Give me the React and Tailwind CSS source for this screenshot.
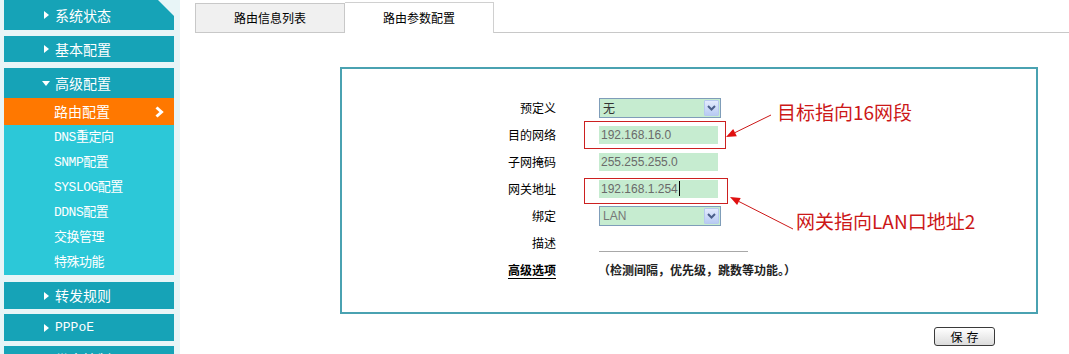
import React from "react";

const TriRight = () => (
  <svg width="5" height="8" viewBox="0 0 5 8" className="shrink-0">
    <path d="M0 0L5 4L0 8Z" fill="white" />
  </svg>
);
const TriDown = () => (
  <svg width="8" height="5" viewBox="0 0 8 5" className="shrink-0">
    <path d="M0 0L8 0L4 5Z" fill="white" />
  </svg>
);

const CJK = "font-[family-name:'Noto_Sans_CJK_SC',sans-serif]";
const MONO = "font-[family-name:'Liberation_Mono','Noto_Sans_CJK_SC',monospace]";
const ARIAL = "font-[family-name:'Liberation_Sans','Noto_Sans_CJK_SC',sans-serif]";

function MainItem({ label, h, clip, down, mono }) {
  return (
    <div
      className={`shrink-0 flex items-center bg-[#16a3b7] pl-[40px] gap-[6px] text-white ${
        mono ? `${MONO} text-[13px]` : `${CJK} text-[14px]`
      } ${clip ? "[clip-path:polygon(0_0,154px_0,100%_16px,100%_100%,0_100%)]" : ""}`}
      style={{ height: h }}
    >
      {down ? (
        <span className="w-[8px] flex justify-center -ml-[2px]">
          <TriDown />
        </span>
      ) : (
        <TriRight />
      )}
      <span className={down ? "-ml-[1px]" : ""}>{label}</span>
    </div>
  );
}

const SelectBtn = () => (
  <div className="w-[15px] h-[16px] mr-[1px] flex items-center justify-center border border-[#b7c9ef] bg-gradient-to-b from-[#e3ebfd] to-[#b8cbf3] rounded-[1px]">
    <svg width="9" height="6" viewBox="0 0 9 6">
      <path d="M1 1L4.5 4.5L8 1" fill="none" stroke="#4b5f8a" strokeWidth="2" />
    </svg>
  </div>
);

function Row({ label, children, bold }) {
  return (
    <div className="flex items-center h-[27px] shrink-0">
      <div
        className={`w-[214px] text-right text-[12px] text-black ${CJK} ${
          bold ? "font-bold underline underline-offset-[3px] text-[#111]" : ""
        }`}
      >
        {label}
      </div>
      <div className="ml-[43px] flex items-center">{children}</div>
    </div>
  );
}

const inputCls = `w-[119px] h-[18px] bg-[#c6ecd0] flex items-center pl-[2px] text-[12px] text-[#6a6a6a] ${ARIAL}`;

export default function App() {
  return (
    <div className="flex w-[1069px] h-[354px] overflow-hidden bg-white">
      {/* Sidebar */}
      <div className="w-[180px] shrink-0 bg-[#e8f5f7] pl-[4px] pr-[6px] flex flex-col overflow-hidden">
        <MainItem label="系统状态" h={30} clip />
        <div className="h-[6px] shrink-0" />
        <MainItem label="基本配置" h={26} />
        <div className="h-[6px] shrink-0" />
        <MainItem label="高级配置" h={30} down />
        <div className={`shrink-0 h-[27px] bg-[#ff7800] flex items-center justify-between pl-[50px] pr-[10px] text-white text-[14px] ${CJK}`}>
          <span>路由配置</span>
          <svg width="9" height="12" viewBox="0 0 9 12">
            <path d="M1.5 1.5L6.5 6L1.5 10.5" fill="none" stroke="white" strokeWidth="3" />
          </svg>
        </div>
        <div className={`shrink-0 bg-[#2cc8d8] flex flex-col pl-[50px] text-white text-[13px] ${MONO}`}>
          {["DNS重定向", "SNMP配置", "SYSLOG配置", "DDNS配置", "交换管理", "特殊功能"].map((t) => (
            <div key={t} className="h-[25px] flex items-center tracking-[-0.5px]">
              {t}
            </div>
          ))}
        </div>
        <div className="h-[7px] shrink-0" />
        <MainItem label="转发规则" h={27} />
        <div className="h-[5px] shrink-0" />
        <MainItem label="PPPoE" h={27} mono />
        <div className="h-[5px] shrink-0" />
        <MainItem label="带宽控制" h={27} />
      </div>

      {/* Main */}
      <div className="flex-1 flex flex-col">
        <div className={`flex items-end pl-[15px] h-[33px] shrink-0 text-[12px] text-black ${CJK}`}>
          <div className="w-[150px] h-[30px] border border-[#c8c8c8] bg-[#f0f0f0] flex items-center justify-center">
            路由信息列表
          </div>
          <div className="w-[149px] h-[31px] border border-b-0 border-l-0 border-[#d0d0d0] bg-white flex items-center justify-center">
            路由参数配置
          </div>
          <div className="flex-1 border-b border-[#c8c8c8]" />
        </div>

        <div className="ml-[160px] mt-[34px] w-[698px] flex flex-col">
          <div className="relative h-[247px] border-2 border-[#4aa2b1] pt-[25px] flex flex-col">
            <Row label="预定义">
              <div className="w-[122px] h-[20px] border border-[#7f9db9] bg-[#c6ecd0] flex items-center justify-between">
                <span className={`pl-[3px] text-[12px] text-[#333] ${CJK}`}>无</span>
                <SelectBtn />
              </div>
            </Row>
            <Row label="目的网络">
              <div className={inputCls}>192.168.16.0</div>
            </Row>
            <Row label="子网掩码">
              <div className={inputCls}>255.255.255.0</div>
            </Row>
            <Row label="网关地址">
              <div className={inputCls}>
                192.168.1.254
                <span className="inline-block w-px h-[15px] bg-black ml-[1px]" />
              </div>
            </Row>
            <Row label="绑定">
              <div className="w-[122px] h-[20px] border border-[#7f9db9] bg-[#c6ecd0] flex items-center justify-between">
                <span className={`pl-[3px] text-[12px] text-[#777] ${ARIAL}`}>LAN</span>
                <SelectBtn />
              </div>
            </Row>
            <Row label="描述">
              <div className="w-[149px] h-[18px] border-b border-[#a8a8a8]" />
            </Row>
            <Row label="高级选项" bold>
              <span className={`-ml-[1px] text-[12px] font-bold text-[#222] ${CJK}`}>
                （检测间隔，优先级，跳数等功能。）
              </span>
            </Row>

            {/* annotations */}
            <div className="absolute left-[242px] top-[52px] w-[142px] h-[28px] border-[1.5px] border-[#cc2020]" />
            <div className="absolute left-[242px] top-[109px] w-[144px] h-[26px] border-[1.5px] border-[#cc2020]" />
            <div className={`absolute left-[435px] top-[33px] text-[19px] leading-none whitespace-nowrap text-[#cc1818] ${CJK}`}>
              目标指向16网段
            </div>
            <div className={`absolute left-[454px] top-[142px] text-[19px] leading-none whitespace-nowrap text-[#cc1818] ${CJK}`}>
              网关指向LAN口地址2
            </div>
            <svg className="absolute left-0 top-0 pointer-events-none" width="694" height="243" viewBox="0 0 694 243">
              <line x1="429" y1="46" x2="393" y2="63.6" stroke="#cc1818" strokeWidth="1" />
              <polygon points="384,68 394.8,67.2 391.2,60" fill="#e01010" />
              <line x1="451" y1="160" x2="396.9" y2="132.5" stroke="#cc1818" strokeWidth="1" />
              <polygon points="388,128 398.7,128.9 395.1,136.1" fill="#e01010" />
            </svg>
          </div>

          <div className="flex justify-end pr-[43px] mt-[13px]">
            <button className={`w-[61px] h-[19px] border border-[#3a3a3a] rounded-[3px] bg-gradient-to-b from-white to-[#dcdcdc] text-[12px] leading-none text-black tracking-[4px] pl-[4px] ${CJK}`}>
              保存
            </button>
          </div>
        </div>
      </div>
    </div>
  );
}
